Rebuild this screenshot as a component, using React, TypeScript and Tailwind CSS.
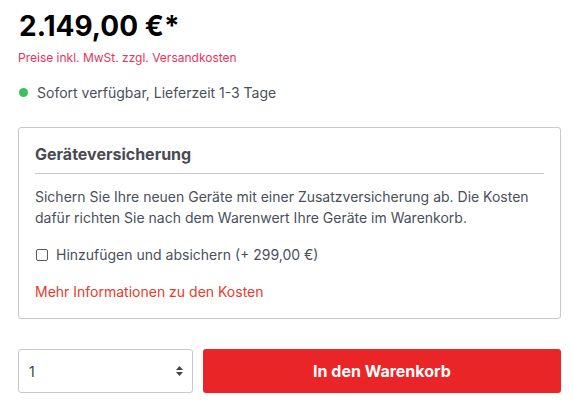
import React from "react";

export default function App() {
  return (
    <div className="w-[574px] h-[403px] bg-white pl-[18px] pr-[13px] pt-[8px]" style={{ fontFamily: "Inter, 'Noto Sans', sans-serif" }}>
      <div className="text-[28px] font-bold leading-[36px] text-black pl-[1px]">2.149,00 €*</div>
      <div className="text-[12px] leading-[16px] text-[#e8335a] mt-[6px]">Preise inkl. MwSt. zzgl. Versandkosten</div>
      <div className="flex items-center mt-[16px] h-[20px]">
        <span className="w-[9px] h-[9px] rounded-full bg-[#3ac25a] ml-[1px] mr-[9px]" />
        <span className="text-[14px] text-[#4a4f5c]">Sofort verfügbar, Lieferzeit 1-3 Tage</span>
      </div>
      <div className="mt-[25px] border border-[#c7c9cd] rounded-[3px] px-[16px] pt-[16px] pb-[15px] h-[192px]">
        <div className="text-[16px] font-bold text-[#4a4a55] leading-[21px] pb-[8px] border-b border-[#c7c9cd]">Geräteversicherung</div>
        <p className="text-[14px] leading-[21px] text-[#4a4f5c] mt-[12px]">
          Sichern Sie Ihre neuen Geräte mit einer Zusatzversicherung ab. Die Kosten dafür richten Sie nach dem Warenwert Ihre Geräte im Warenkorb.
        </p>
        <label className="flex items-center mt-[17px] text-[14px] text-[#4a4f5c] leading-[20px]">
          <span className="w-[12px] h-[12px] border border-[#5a5a5a] rounded-[2px] ml-[1px] mr-[8px]" />
          Hinzufügen und absichern (+ 299,00 €)
        </label>
        <div className="text-[14px] leading-[20px] text-[#ea3a2c] mt-[17px]">Mehr Informationen zu den Kosten</div>
      </div>
      <div className="flex mt-[30px] gap-[10px]">
        <div className="w-[175px] h-[44px] border border-[#c7c9cd] rounded-[3px] flex items-center justify-between pl-[10px] pr-[8px]">
          <span className="text-[14px] text-[#3a3f4c]">1</span>
          <svg width="9" height="12" viewBox="0 0 9 12">
            <path d="M4.5 1 L8 5 H1 Z" fill="#444" />
            <path d="M4.5 11 L8 7 H1 Z" fill="#444" />
          </svg>
        </div>
        <button className="flex-1 h-[44px] bg-[#ea2528] rounded-[3px] text-white font-bold text-[16px]">In den Warenkorb</button>
      </div>
    </div>
  );
}
